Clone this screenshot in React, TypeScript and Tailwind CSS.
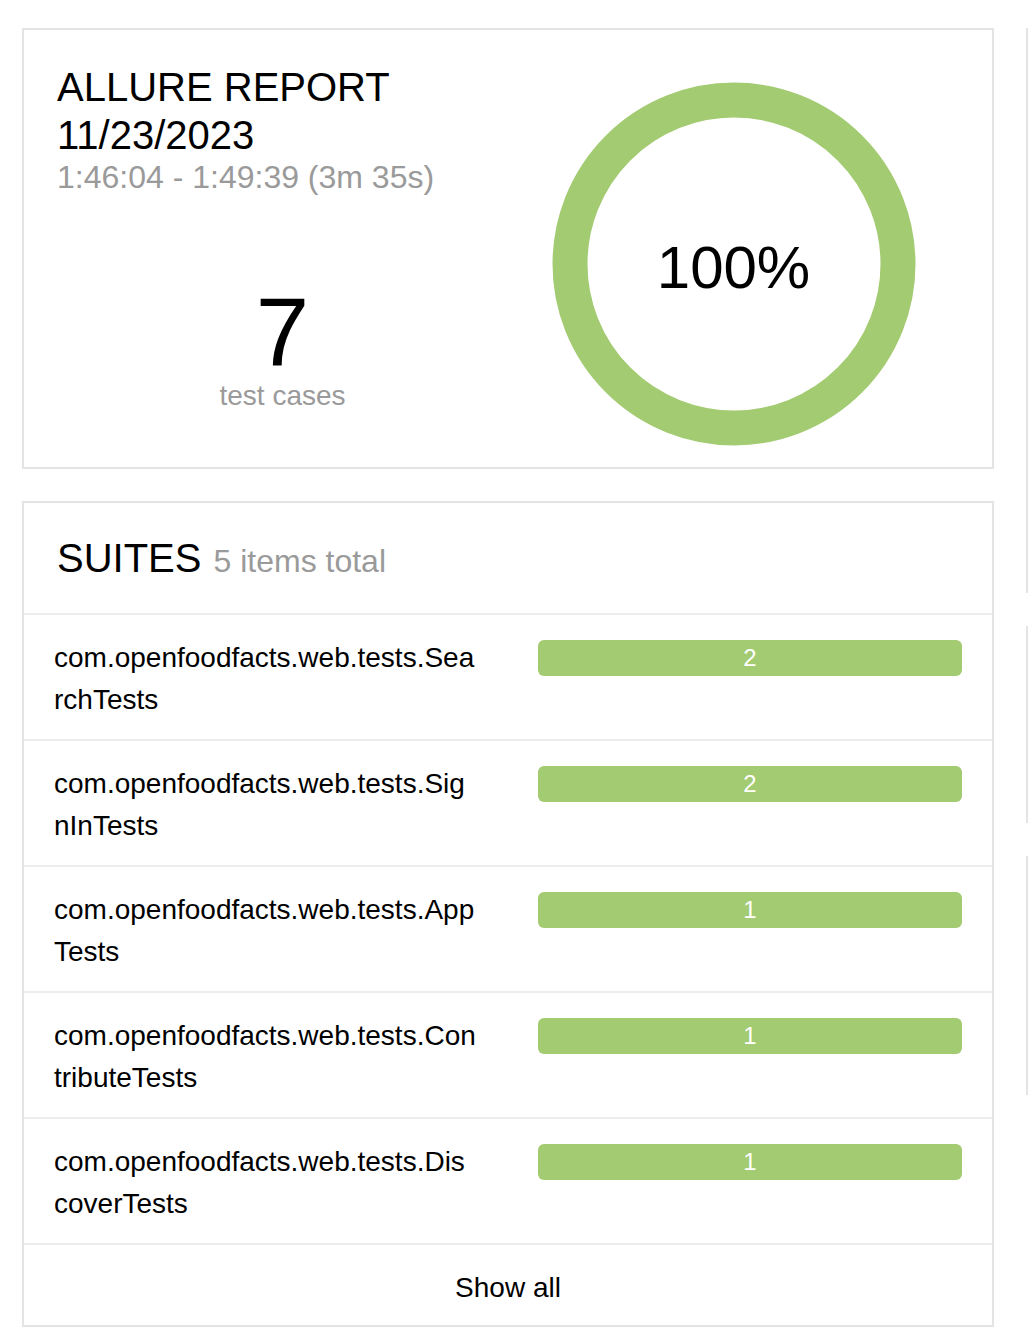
import React from 'react';

const suites = [
  { name: 'com.openfoodfacts.web.tests.SearchTests', count: 2 },
  { name: 'com.openfoodfacts.web.tests.SignInTests', count: 2 },
  { name: 'com.openfoodfacts.web.tests.AppTests', count: 1 },
  { name: 'com.openfoodfacts.web.tests.ContributeTests', count: 1 },
  { name: 'com.openfoodfacts.web.tests.DiscoverTests', count: 1 },
];

const Ring: React.FC = () => (
  <div className="relative w-[364px] h-[364px]">
    <svg width="364" height="364" viewBox="0 0 364 364">
      <circle cx="182" cy="182" r="164" fill="none" stroke="#a3cb72" strokeWidth="35" />
    </svg>
    {/* percentage overlay */}
    <div className="absolute inset-0 flex items-center justify-center pt-[8px]">
      <span className="text-[60px] leading-none text-black">100%</span>
    </div>
  </div>
);

const SummaryCard: React.FC = () => (
  <div className="border-2 border-[#e4e4e4] bg-white px-[33px] pt-[33px] pb-[21px] flex">
    {/* Left: title + count */}
    <div className="w-1/2 flex flex-col">
      <h2 className="text-[40px] leading-[48px] text-black">
        ALLURE REPORT
        <br />
        11/23/2023
      </h2>
      <div className="text-[32px] leading-[36px] text-[#9a9a9a]">1:46:04 - 1:49:39 (3m 35s)</div>
      <div className="mt-[89px] flex flex-col items-center">
        <div className="text-[96px] leading-none text-black">7</div>
        <div className="text-[28px] leading-[32px] text-[#9a9a9a]">test cases</div>
      </div>
    </div>

    {/* Right: ring */}
    <div className="w-1/2 flex justify-center pt-[19px]">
      <Ring />
    </div>
  </div>
);

const SuitesCard: React.FC = () => (
  <div className="border-2 border-[#e4e4e4] bg-white">
    {/* Header */}
    <div className="h-[110px] px-[33px] pt-[31px]">
      <h2 className="flex items-baseline gap-[12px] text-[40px] leading-[48px] text-black">
        <span>SUITES</span>
        <span className="text-[32px] leading-[48px] text-[#9a9a9a]">5 items total</span>
      </h2>
    </div>

    {/* Rows */}
    {suites.map((suite) => (
      <div key={suite.name} className="border-t-2 border-[#ececec] px-[30px] pt-[22px] pb-[18px] flex">
        <div className="w-[454px] shrink-0 pr-[31px]">
          <div className="text-[28px] leading-[42px] text-black break-all">{suite.name}</div>
        </div>
        <div className="flex-1 pl-[30px]">
          <div className="mt-[3px] h-[36px] rounded-[6px] bg-[#a3cb72] flex items-center justify-center text-[24px] leading-none text-white">
            {suite.count}
          </div>
        </div>
      </div>
    ))}

    {/* Footer */}
    <div className="border-t-2 border-[#ececec] pt-[22px] pb-[16px] text-center text-[28px] leading-[42px] text-black">
      Show all
    </div>
  </div>
);

const App: React.FC = () => {
  return (
    <div
      className="w-[1028px] min-h-[1334px] overflow-hidden bg-white"
      style={{ fontFamily: '"Liberation Sans", Arial, sans-serif' }}
    >
      <div className="flex gap-[32px] pl-[22px] pt-[28px]">
        {/* Main column */}
        <div className="w-[972px] shrink-0 flex flex-col gap-[32px]">
          <SummaryCard />
          <SuitesCard />
        </div>

        {/* Next column (cut off at the window edge) */}
        <div className="w-[972px] shrink-0 flex flex-col gap-[33px]">
          <div className="h-[565px] border-2 border-[#e4e4e4] bg-white" />
          <div className="h-[197px] border-2 border-[#e4e4e4] bg-white" />
          <div className="h-[239px] border-2 border-[#e4e4e4] bg-white" />
        </div>
      </div>
    </div>
  );
};

export default App;
